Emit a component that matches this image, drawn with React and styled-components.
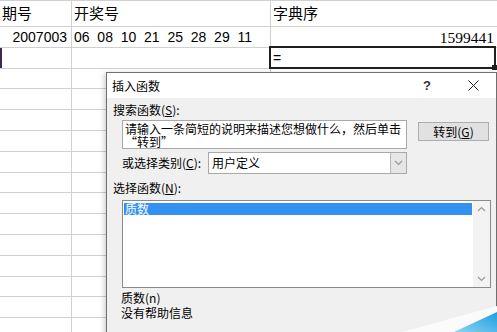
import React from "react";
import styled, { createGlobalStyle } from "styled-components";

const GlobalStyle = createGlobalStyle`
  html, body {
    margin: 0;
    padding: 0;
    background: #fff;
  }
`;

const Screen = styled.div`
  position: relative;
  width: 497px;
  height: 332px;
  overflow: hidden;
  background: #fff;
`;

const Sheet = styled.div`
  display: flex;
  flex-direction: column;
  border-top: 1px solid #d0d0d0;
`;

const Row = styled.div`
  display: grid;
  grid-template-columns: 72px 199px 228px;
  height: ${p => (p.$head ? "26px" : "20.8px")};
  box-sizing: border-box;
  border-bottom: 1px solid #d0d0d0;
  flex-shrink: 0;
`;

const Cell = styled.div`
  position: relative;
  display: flex;
  align-items: flex-end;
  justify-content: ${p => (p.$right ? "flex-end" : "flex-start")};
  padding: ${p => (p.$right ? "0 4px 1px 2px" : "0 2px 1px 2px")};
  border-right: 1px solid #d0d0d0;
  box-sizing: border-box;
  font-family: ${p =>
    p.$serif
      ? '"Liberation Serif", serif'
      : '"Liberation Sans", "Noto Sans CJK SC", sans-serif'};
  font-size: ${p => (p.$serif ? "15.5px" : "14px")};
  white-space: pre;
  color: #000;
  line-height: 17px;

  ${p =>
    p.$active &&
    `
    &::after {
      content: "";
      position: absolute;
      left: -2px;
      top: -2px;
      right: 2px;
      bottom: -1px;
      border: 2px solid #1f1f1f;
    }
    &::before {
      content: "";
      position: absolute;
      right: 0px;
      bottom: -3px;
      width: 5px;
      height: 5px;
      background: #1f1f1f;
      border: 1px solid #fff;
    }
  `}
  ${p => p.$mark && `box-shadow: inset 2px 0 0 #3b2a4a;`}
`;

const HeadText = styled.span`
  font-family: "Noto Sans CJK SC", sans-serif;
  font-size: 15px;
  line-height: 20px;
  padding-bottom: 2px;
`;

const Dialog = styled.div`
  position: absolute;
  left: 106px;
  top: 72px;
  width: 391px;
  height: 270px;
  box-sizing: border-box;
  background: #f0f0f0;
  border: 1px solid #6f6f6f;
  box-shadow: -2px 1px 5px rgba(0, 0, 0, 0.18);
  font-family: "Noto Sans CJK SC", sans-serif;
  font-size: 12px;
  color: #000;
`;

const TitleBar = styled.div`
  height: 25px;
  background: #fff;
  display: flex;
  align-items: center;
  padding-left: 5px;
`;

const Title = styled.div`
  flex: 1;
  line-height: 16px;
`;

const TitleButton = styled.div`
  width: 46px;
  height: 25px;
  display: flex;
  align-items: center;
  justify-content: center;
  font-family: "Liberation Sans", sans-serif;
  font-size: 13px;
  font-weight: bold;
  color: #333;
`;

const Body = styled.div`
  padding: 4px 6px 0 6px;
  display: flex;
  flex-direction: column;
`;

const Label = styled.div`
  line-height: 16px;
  margin-top: ${p => p.$top || 0}px;
  width: ${p => (p.$width ? p.$width + "px" : "auto")};
  flex-shrink: 0;
`;

const SearchRow = styled.div`
  display: flex;
  align-items: flex-start;
  margin-top: 2px;
  padding-left: 9px;
`;

const SearchBox = styled.div`
  width: 285px;
  height: 29px;
  box-sizing: border-box;
  background: #fff;
  border: 1px solid #a9a9a9;
  padding: 1px 2px 0 2px;
  overflow: hidden;
`;

const SearchLine = styled.div`
  line-height: 13px;
  height: 13px;
`;

const GoButton = styled.div`
  margin-left: 11px;
  margin-top: 2px;
  width: 71px;
  height: 19px;
  box-sizing: border-box;
  background: #e1e1e1;
  border: 1px solid #adadad;
  display: flex;
  align-items: center;
  justify-content: center;
  line-height: 14px;
`;

const CategoryRow = styled.div`
  display: flex;
  align-items: center;
  margin-top: 3px;
  padding-left: 9px;
  height: 22px;
`;

const Select = styled.div`
  width: 199px;
  height: 22px;
  box-sizing: border-box;
  background: #fff;
  border: 1px solid #a9a9a9;
  display: flex;
  align-items: center;
`;

const SelectText = styled.div`
  flex: 1;
  padding-left: 3px;
  line-height: 16px;
`;

const SelectArrow = styled.div`
  width: 16px;
  height: 20px;
  box-sizing: border-box;
  background: #e6e6e6;
  border-left: 1px solid #b8b8b8;
  display: flex;
  align-items: center;
  justify-content: center;
`;

const ListBox = styled.div`
  margin-top: 4px;
  margin-left: 9px;
  width: 369px;
  height: 88px;
  box-sizing: border-box;
  background: #fff;
  border: 1px solid #8a8a8a;
  display: flex;
`;

const ListItems = styled.div`
  flex: 1;
  padding: 2px 1px 0 1px;
`;

const ListItem = styled.div`
  height: 12px;
  line-height: 12px;
  padding-left: 1px;
  background: ${p => (p.$selected ? "#3391f2" : "transparent")};
  color: ${p => (p.$selected ? "#fff" : "#000")};
`;

const ScrollBar = styled.div`
  width: 17px;
  background: #f3f3f3;
  display: flex;
  flex-direction: column;
  justify-content: space-between;
  align-items: center;
  padding: 5px 0;
`;

const HelpText = styled.div`
  margin-top: 2px;
  margin-left: 8px;
`;

const HelpLine = styled.div`
  line-height: 15px;
  height: 15px;
`;

const Curl = styled.svg`
  position: absolute;
  right: 0;
  bottom: 0;
`;

const Chevron = ({ up }) => (
  <svg width="9" height="6" viewBox="0 0 9 6">
    <path
      d={up ? "M1 5 L4.5 1.5 L8 5" : "M1 1 L4.5 4.5 L8 1"}
      fill="none"
      stroke="#9a9a9a"
      strokeWidth="1.2"
    />
  </svg>
);

const rows = Array.from({ length: 13 });

export default function App() {
  return (
    <Screen>
      <GlobalStyle />
      <Sheet>
        <Row $head>
          <Cell>
            <HeadText>期号</HeadText>
          </Cell>
          <Cell>
            <HeadText>开奖号</HeadText>
          </Cell>
          <Cell>
            <HeadText>字典序</HeadText>
          </Cell>
        </Row>
        <Row>
          <Cell $right>2007003</Cell>
          <Cell>{"06  08  10  21  25  28  29  11"}</Cell>
          <Cell $right $serif>
            1599441
          </Cell>
        </Row>
        <Row>
          <Cell $mark />
          <Cell />
          <Cell $active>=</Cell>
        </Row>
        {rows.map((_, i) => (
          <Row key={i}>
            <Cell />
            <Cell />
            <Cell />
          </Row>
        ))}
      </Sheet>

      <Dialog>
        <TitleBar>
          <Title>插入函数</Title>
          <TitleButton>?</TitleButton>
          <TitleButton>
            <svg width="11" height="11" viewBox="0 0 11 11">
              <path d="M0.5 0.5 L10.5 10.5 M10.5 0.5 L0.5 10.5" stroke="#222" strokeWidth="1" />
            </svg>
          </TitleButton>
        </TitleBar>
        <Body>
          <Label>
            搜索函数(<u>S</u>):
          </Label>
          <SearchRow>
            <SearchBox>
              <SearchLine>请输入一条简短的说明来描述您想做什么，然后单击</SearchLine>
              <SearchLine>“转到”</SearchLine>
            </SearchBox>
            <GoButton>
              转到(<u>G</u>)
            </GoButton>
          </SearchRow>
          <CategoryRow>
            <Label $width={86}>
              或选择类别(<u>C</u>):
            </Label>
            <Select>
              <SelectText>用户定义</SelectText>
              <SelectArrow>
                <Chevron />
              </SelectArrow>
            </Select>
          </CategoryRow>
          <Label $top={6}>
            选择函数(<u>N</u>):
          </Label>
          <ListBox>
            <ListItems>
              <ListItem $selected>质数</ListItem>
            </ListItems>
            <ScrollBar>
              <Chevron up />
              <Chevron />
            </ScrollBar>
          </ListBox>
          <HelpText>
            <HelpLine>质数(n)</HelpLine>
            <HelpLine>没有帮助信息</HelpLine>
          </HelpText>
        </Body>
      </Dialog>

      <Curl width="95" height="28" viewBox="0 0 95 28">
        <defs>
          <linearGradient id="curlBlue" x1="0" y1="1" x2="1" y2="0">
            <stop offset="0" stopColor="#8fd3f2" />
            <stop offset="1" stopColor="#1c9ee0" />
          </linearGradient>
        </defs>
        <polygon points="0,28 95,2 95,28" fill="#fbfbfb" />
        <polygon points="52,28 95,8 95,28" fill="url(#curlBlue)" />
      </Curl>
    </Screen>
  );
}
